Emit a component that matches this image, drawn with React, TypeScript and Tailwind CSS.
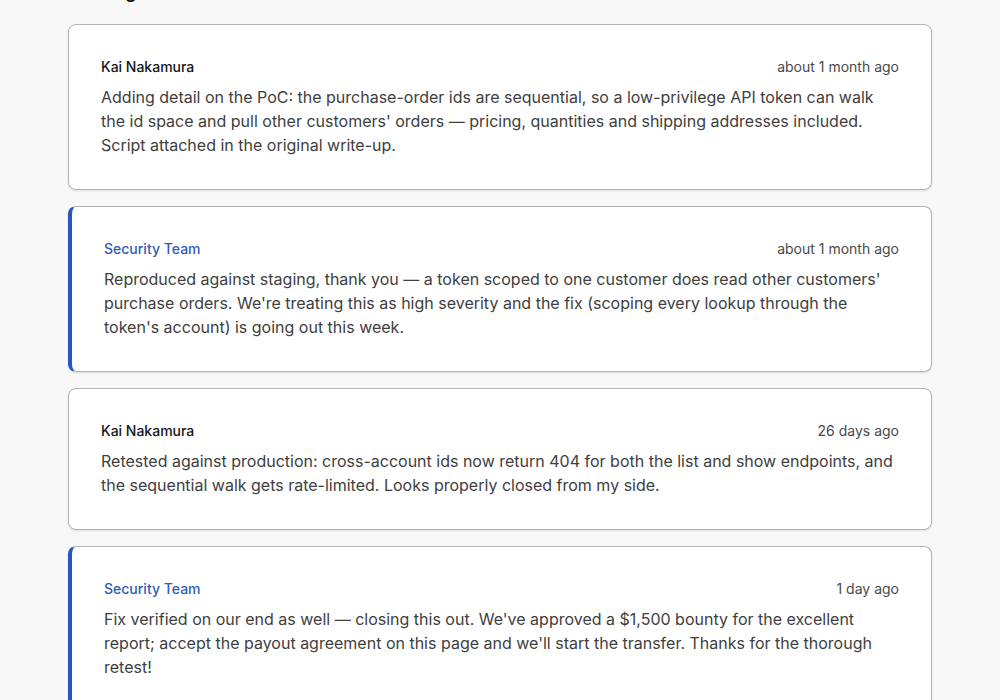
const messages = [
  {
    author: "Kai Nakamura",
    staff: false,
    time: "about 1 month ago",
    body: "Adding detail on the PoC: the purchase-order ids are sequential, so a low-privilege API token can walk the id space and pull other customers' orders — pricing, quantities and shipping addresses included. Script attached in the original write-up.",
  },
  {
    author: "Security Team",
    staff: true,
    time: "about 1 month ago",
    body: "Reproduced against staging, thank you — a token scoped to one customer does read other customers' purchase orders. We're treating this as high severity and the fix (scoping every lookup through the token's account) is going out this week.",
  },
  {
    author: "Kai Nakamura",
    staff: false,
    time: "26 days ago",
    body: "Retested against production: cross-account ids now return 404 for both the list and show endpoints, and the sequential walk gets rate-limited. Looks properly closed from my side.",
  },
  {
    author: "Security Team",
    staff: true,
    time: "1 day ago",
    body: "Fix verified on our end as well — closing this out. We've approved a $1,500 bounty for the excellent report; accept the payout agreement on this page and we'll start the transfer. Thanks for the thorough retest!",
  },
];

export default function App() {
  return (
    <div className="min-h-screen overflow-hidden bg-[#f8f8f8] font-['Inter',sans-serif] text-[#3f3f3f]">
      <div className="mx-auto w-[864px]">
        <h2 className="-mt-[22px] mb-[18px] text-lg font-semibold leading-7 text-[#1a1a1a]">Messages</h2>
        <div className="flex flex-col gap-4">
          {messages.map((m, i) => (
            <div
              key={i}
              className={
                m.staff
                  ? "rounded-lg border border-[#b4b4b4] border-l-4 border-l-[#2756c0] bg-white p-8 shadow-[0_1px_2px_rgba(0,0,0,0.12)]"
                  : "rounded-lg border border-[#b4b4b4] bg-white p-8 shadow-[0_1px_2px_rgba(0,0,0,0.12)]"
              }
            >
              <div className="flex items-center justify-between text-sm leading-5">
                <span className={m.staff ? "font-medium text-[#2f5cb8]" : "font-medium text-[#161616]"}>
                  {m.author}
                </span>
                <span className="text-[#4a4a4a]">{m.time}</span>
              </div>
              <p className="mt-2 text-base leading-6 text-[#404040]">{m.body}</p>
            </div>
          ))}
        </div>
      </div>
    </div>
  );
}
